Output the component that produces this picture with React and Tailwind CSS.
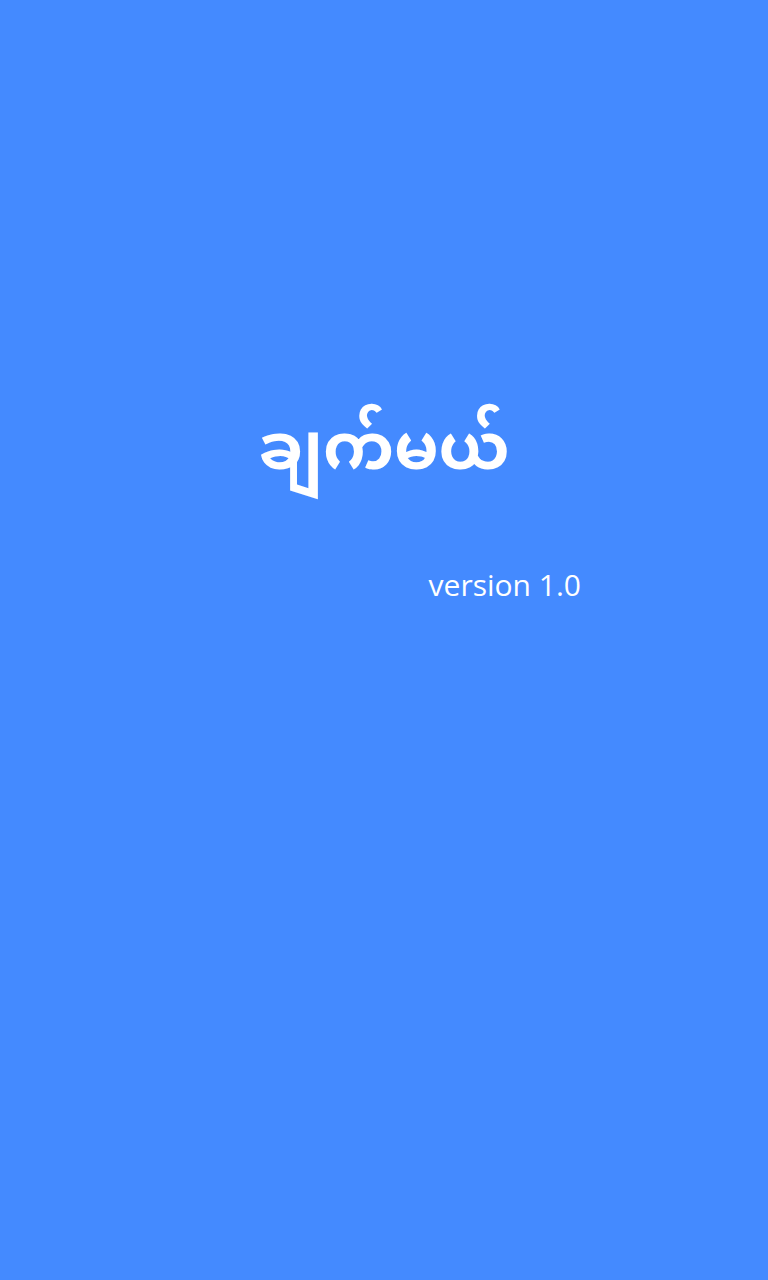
import React from "react";

function App() {
  return (
    <div className="min-h-[1280px] w-full bg-[#448aff] text-white flex flex-col">
      <div className="pt-[394px] flex justify-center">
        <h1
          className="text-[64px] leading-[120px] font-bold"
          style={{ fontFamily: '"Noto Sans Myanmar", "Noto Sans", "Padauk", sans-serif' }}
        >
          ချက်မယ်
        </h1>
      </div>
      <div className="pt-[51px] flex justify-end pr-[187px]">
        <p className="text-[30px] leading-[40px] font-['Open_Sans',sans-serif]">version 1.0</p>
      </div>
    </div>
  );
}

export default App;
